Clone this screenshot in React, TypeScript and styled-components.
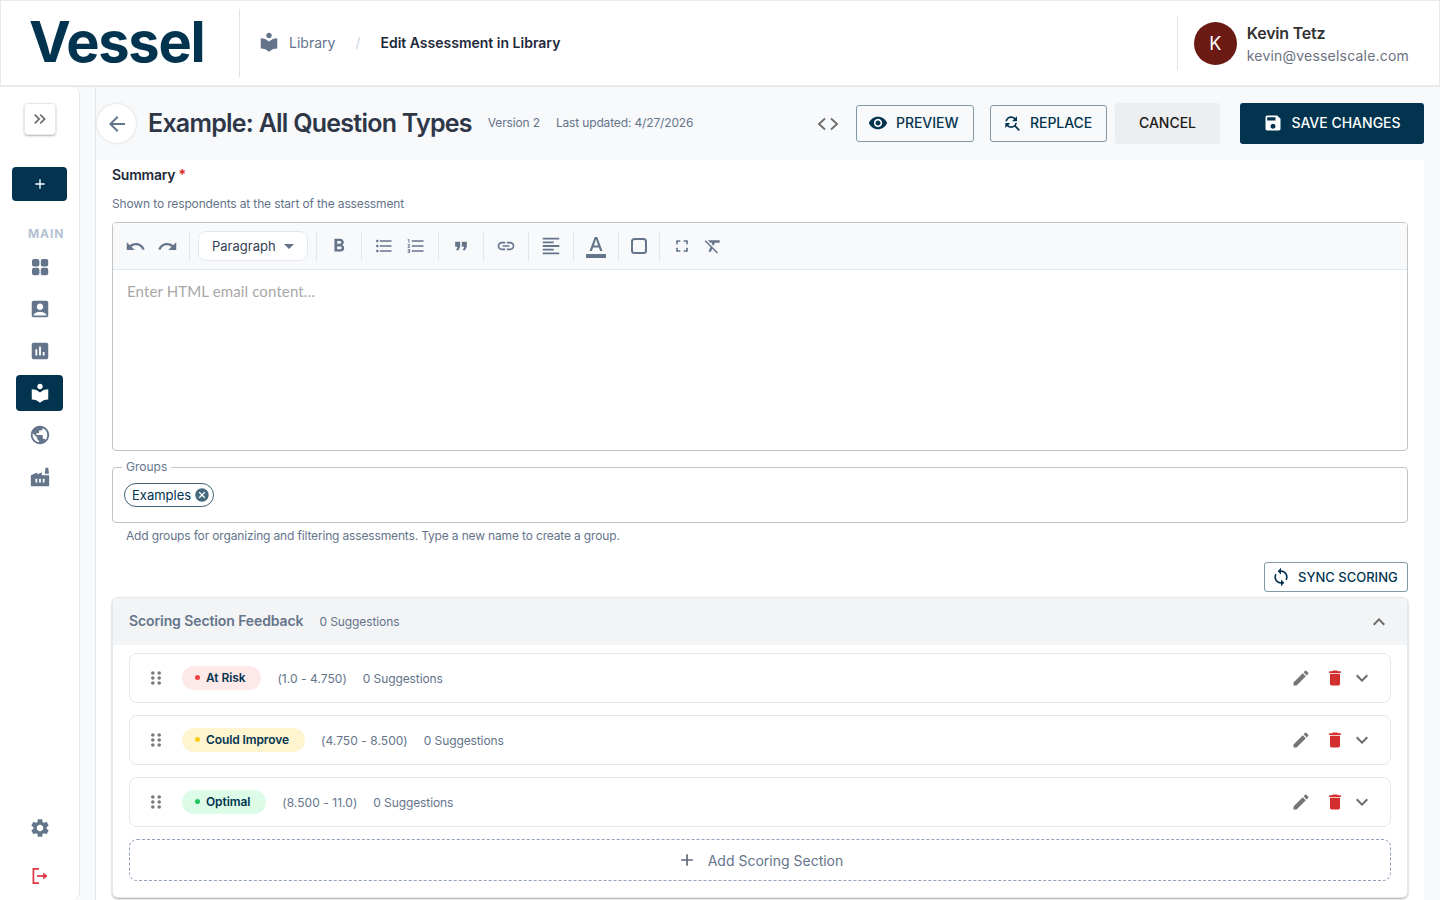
import React from 'react'
import styled, {createGlobalStyle} from 'styled-components'
import {
    MdAccountBox, MdAdd, MdArrowBack, MdAssessment, MdCancel, MdDelete,
    MdEdit, MdExpandLess, MdExpandMore, MdFactory, MdFindReplace, MdFormatAlignLeft, MdFormatBold, MdFormatClear,
    MdFormatColorText, MdFormatListBulleted, MdFormatListNumbered, MdFormatQuote, MdFullscreen,
    MdKeyboardDoubleArrowRight, MdLink, MdLocalLibrary, MdPublic, MdRedo, MdSave, MdSettings, MdSync, MdUndo,
    MdVisibility
} from 'react-icons/md'

const navy = '#02344f'
const slate = '#64748b'

const GlobalStyle = createGlobalStyle`
    html, body {
        margin: 0;
        padding: 0;
        height: 100%;
        background: #f8f9fb;
        font-family: Inter, "Liberation Sans", sans-serif;
    }
    * {
        box-sizing: border-box;
    }
`

const sections = [
    {name: 'At Risk', range: '(1.0 - 4.750)', bg: '#fee9e9', dot: '#ef4444'},
    {name: 'Could Improve', range: '(4.750 - 8.500)', bg: '#fef4cf', dot: '#facc15'},
    {name: 'Optimal', range: '(8.500 - 11.0)', bg: '#dcfce7', dot: '#22c55e'}
]

const DashboardIcon = () => (
    <svg width="24" height="24" viewBox="0 0 24 24" fill="currentColor">
        <rect x="4" y="4" width="7.4" height="7.4" rx="2" />
        <rect x="12.8" y="4" width="7.4" height="7.4" rx="2" />
        <rect x="4" y="12.8" width="7.4" height="7.4" rx="2" />
        <rect x="12.8" y="12.8" width="7.4" height="7.4" rx="2" />
    </svg>
)

const LogoutIcon = () => (
    <svg width="20" height="20" viewBox="0 0 20 20" fill="none" stroke="#dc3545" strokeWidth="1.7">
        <path d="M9 2.8H3.4v14.4H9" />
        <path d="M7 10h10" />
        <path d="M13.6 7.2 17 10l-3.4 2.8z" fill="#dc3545" strokeWidth="0.8" />
    </svg>
)

const DragDots = () => (
    <svg width="10" height="14" viewBox="0 0 10 14" fill="#7a7a7a">
        {[2, 7, 12].map(y => [1.8, 8.2].map(x => <circle key={`${x}-${y}`} cx={x} cy={y} r="1.8" />))}
    </svg>
)

const CodeIcon = () => (
    <svg width="22" height="14" viewBox="0 0 22 14" fill="none" stroke="currentColor" strokeWidth="1.8">
        <path d="M8 1.5 2 7l6 5.5" />
        <path d="M14 1.5 20 7l-6 5.5" />
    </svg>
)

const SquareIcon = () => (
    <svg width="18" height="18" viewBox="0 0 18 18" fill="none" stroke="currentColor" strokeWidth="2">
        <rect x="2" y="2" width="14" height="14" rx="2.5" />
    </svg>
)

export default function App() {
    return (
        <Page>
            <GlobalStyle />
            <Header>
                <Logo>Vessel</Logo>
                <Crumbs>
                    <CrumbIcon><MdLocalLibrary size={22} /></CrumbIcon>
                    <CrumbLink>Library</CrumbLink>
                    <CrumbSlash>/</CrumbSlash>
                    <CrumbCurrent>Edit Assessment in Library</CrumbCurrent>
                </Crumbs>
                <UserBlock>
                    <Avatar>K</Avatar>
                    <UserText>
                        <UserName>Kevin Tetz</UserName>
                        <UserEmail>kevin@vesselscale.com</UserEmail>
                    </UserText>
                </UserBlock>
            </Header>
            <Body>
                <Sidebar>
                    <CollapseButton><MdKeyboardDoubleArrowRight size={20} /></CollapseButton>
                    <CreateButton><MdAdd size={16} /></CreateButton>
                    <NavLabel>MAIN</NavLabel>
                    <NavList>
                        <NavItem><DashboardIcon /></NavItem>
                        <NavItem><MdAccountBox size={22} /></NavItem>
                        <NavItem><MdAssessment size={22} /></NavItem>
                        <NavItem $active><MdLocalLibrary size={22} /></NavItem>
                        <NavItem><MdPublic size={22} /></NavItem>
                        <NavItem><MdFactory size={22} /></NavItem>
                    </NavList>
                    <NavFooter>
                        <NavItem><MdSettings size={22} /></NavItem>
                        <NavItem><LogoutIcon /></NavItem>
                    </NavFooter>
                </Sidebar>
                <Main>
                    <TopBar>
                        <BackButton><MdArrowBack size={24} /></BackButton>
                        <Title>Example: All Question Types</Title>
                        <Meta>Version 2</Meta>
                        <Meta>Last updated: 4/27/2026</Meta>
                        <TopActions>
                            <CodeToggle><CodeIcon /></CodeToggle>
                            <OutlineButton $width={118}><MdVisibility size={20} />PREVIEW</OutlineButton>
                            <OutlineButton $width={117}><MdFindReplace size={20} />REPLACE</OutlineButton>
                            <CancelButton>CANCEL</CancelButton>
                            <SaveButton><MdSave size={20} />SAVE CHANGES</SaveButton>
                        </TopActions>
                    </TopBar>
                    <Content>
                        <FieldLabel>Summary <Required>*</Required></FieldLabel>
                        <FieldHint>Shown to respondents at the start of the assessment</FieldHint>
                        <Editor>
                            <Toolbar>
                                <ToolGroup>
                                    <Tool><MdUndo size={21} /></Tool>
                                    <Tool><MdRedo size={21} /></Tool>
                                </ToolGroup>
                                <ToolGroup $pad={8}>
                                    <BlockSelect>Paragraph<SelectCaret /></BlockSelect>
                                </ToolGroup>
                                <ToolGroup>
                                    <Tool><MdFormatBold size={22} /></Tool>
                                </ToolGroup>
                                <ToolGroup>
                                    <Tool><MdFormatListBulleted size={20} /></Tool>
                                    <Tool><MdFormatListNumbered size={20} /></Tool>
                                </ToolGroup>
                                <ToolGroup>
                                    <Tool><MdFormatQuote size={20} /></Tool>
                                </ToolGroup>
                                <ToolGroup>
                                    <Tool><MdLink size={20} /></Tool>
                                </ToolGroup>
                                <ToolGroup>
                                    <Tool><MdFormatAlignLeft size={22} /></Tool>
                                </ToolGroup>
                                <ToolGroup>
                                    <Tool><MdFormatColorText size={24} /></Tool>
                                </ToolGroup>
                                <ToolGroup $pad={5}>
                                    <Tool $width={30}><SquareIcon /></Tool>
                                </ToolGroup>
                                <ToolGroup $last>
                                    <Tool $width={31}><MdFullscreen size={20} /></Tool>
                                    <Tool $width={31}><MdFormatClear size={20} /></Tool>
                                </ToolGroup>
                            </Toolbar>
                            <EditorBody>Enter HTML email content...</EditorBody>
                        </Editor>
                        <GroupsField>
                            <GroupsLegend>Groups</GroupsLegend>
                            <Chip>Examples<MdCancel size={16} /></Chip>
                        </GroupsField>
                        <GroupsHint>Add groups for organizing and filtering assessments. Type a new name to create a group.</GroupsHint>
                        <SyncRow>
                            <SyncButton><MdSync size={20} />SYNC SCORING</SyncButton>
                        </SyncRow>
                        <FeedbackCard>
                            <FeedbackHeader>
                                <FeedbackTitle>Scoring Section Feedback</FeedbackTitle>
                                <Muted>0 Suggestions</Muted>
                                <HeaderChevron><MdExpandLess size={24} /></HeaderChevron>
                            </FeedbackHeader>
                            <FeedbackBody>
                                {sections.map(section => (
                                    <SectionRow key={section.name}>
                                        <DragHandle><DragDots /></DragHandle>
                                        <Badge $bg={section.bg} $dot={section.dot}>{section.name}</Badge>
                                        <RangeText>{section.range}</RangeText>
                                        <Muted>0 Suggestions</Muted>
                                        <RowActions>
                                            <EditIcon><MdEdit size={20} /></EditIcon>
                                            <DeleteIcon><MdDelete size={20} /></DeleteIcon>
                                            <ExpandIcon><MdExpandMore size={24} /></ExpandIcon>
                                        </RowActions>
                                    </SectionRow>
                                ))}
                                <AddSection><MdAdd size={20} />Add Scoring Section</AddSection>
                            </FeedbackBody>
                        </FeedbackCard>
                    </Content>
                </Main>
            </Body>
        </Page>
    )
}

const Page = styled.div`
    display: flex;
    flex-direction: column;
    height: 900px;
    overflow: hidden;
`

const Header = styled.header`
    display: flex;
    align-items: center;
    flex-shrink: 0;
    height: 87px;
    background: #fff;
    border: 1px solid #e8e9eb;
    border-bottom-width: 2px;
`

const Logo = styled.div`
    display: flex;
    align-items: center;
    width: 239px;
    height: 68px;
    padding-left: 28px;
    padding-bottom: 2px;
    border-right: 1px solid #e0e2e5;
    color: ${navy};
    font-size: 56px;
    font-weight: 700;
    letter-spacing: -1.25px;
`

const Crumbs = styled.nav`
    display: flex;
    align-items: center;
    margin-left: 18px;
    margin-bottom: 2px;
    font-size: 14px;
`

const CrumbIcon = styled.span`
    display: flex;
    margin-right: 9px;
    color: ${slate};
`

const CrumbLink = styled.span`
    color: ${slate};
`

const CrumbSlash = styled.span`
    margin: 0 20px;
    color: #cbd5e1;
`

const CrumbCurrent = styled.span`
    color: #1e293b;
    font-weight: 600;
`

const UserBlock = styled.div`
    display: flex;
    align-items: center;
    height: 54px;
    margin-left: auto;
    margin-right: 30px;
    padding-left: 16px;
    border-left: 1px solid #e0e2e5;
`

const Avatar = styled.div`
    display: flex;
    align-items: center;
    justify-content: center;
    width: 43px;
    height: 43px;
    border-radius: 50%;
    background: #6b1a14;
    color: #fff;
    font-size: 18px;
`

const UserText = styled.div`
    display: flex;
    flex-direction: column;
    gap: 4px;
    margin-left: 10px;
`

const UserName = styled.div`
    color: #333;
    font-size: 16px;
    font-weight: 600;
    letter-spacing: -0.2px;
`

const UserEmail = styled.div`
    color: #6b7280;
    font-size: 14px;
    letter-spacing: 0.2px;
`

const Body = styled.div`
    display: flex;
    flex: 1;
    min-height: 0;
`

const Sidebar = styled.aside`
    display: flex;
    flex-direction: column;
    align-items: center;
    flex-shrink: 0;
    width: 80px;
    margin-right: 15px;
    padding-top: 16px;
    padding-bottom: 6px;
    background: #fff;
    border-right: 1px solid #e5e7eb;
    border-radius: 0 8px 8px 0;
`

const CollapseButton = styled.div`
    display: flex;
    align-items: center;
    justify-content: center;
    width: 32px;
    height: 32px;
    border: 1px solid #e7e8ea;
    border-radius: 4px;
    box-shadow: 0 1px 2px rgba(0, 0, 0, 0.3);
    color: #6b6b6b;
`

const CreateButton = styled.div`
    display: flex;
    align-items: center;
    justify-content: center;
    width: 55px;
    height: 34px;
    margin-top: 32px;
    border-radius: 4px;
    background: ${navy};
    color: #fff;
`

const NavLabel = styled.div`
    align-self: flex-start;
    margin-top: 25px;
    margin-left: 28px;
    color: #b4c2d3;
    font-size: 12px;
    line-height: 15px;
    font-weight: 700;
    letter-spacing: 0.9px;
`

const NavList = styled.div`
    display: flex;
    flex-direction: column;
    align-items: center;
    gap: 6px;
    margin-top: 8px;
`

const NavItem = styled.div<{$active?: boolean}>`
    display: flex;
    align-items: center;
    justify-content: center;
    width: 47px;
    height: 36px;
    border-radius: 4px;
    background: ${({$active}) => ($active ? navy : 'transparent')};
    color: ${({$active}) => ($active ? '#fff' : slate)};
`

const NavFooter = styled.div`
    display: flex;
    flex-direction: column;
    gap: 12px;
    margin-top: auto;
`

const Main = styled.main`
    display: flex;
    flex-direction: column;
    width: 1329px;
    border-left: 1px solid #e5e7eb;
`

const TopBar = styled.div`
    display: flex;
    align-items: center;
    flex-shrink: 0;
    height: 73px;
`

const BackButton = styled.div`
    display: flex;
    align-items: center;
    justify-content: center;
    width: 39px;
    height: 39px;
    margin-left: 1px;
    border-radius: 50%;
    background: #fff;
    box-shadow: 0 0 3px rgba(0, 0, 0, 0.16);
    color: ${slate};
`

const Title = styled.h1`
    margin: 0 16px 2px 12px;
    color: #2d3748;
    font-size: 25px;
    font-weight: 600;
    letter-spacing: -0.75px;
`

const Meta = styled.span`
    margin-right: 16px;
    margin-bottom: 2px;
    color: ${slate};
    font-size: 12px;
    letter-spacing: -0.15px;
`

const TopActions = styled.div`
    display: flex;
    align-items: center;
    margin-left: auto;
`

const CodeToggle = styled.div`
    display: flex;
    margin-right: 17px;
    color: #6b6b6b;
`

const OutlineButton = styled.div<{$width: number}>`
    display: flex;
    align-items: center;
    gap: 8px;
    width: ${({$width}) => $width}px;
    height: 37px;
    margin-right: 16px;
    padding-left: 11px;
    padding-bottom: 2px;
    border: 1px solid #7f99a7;
    border-radius: 3px;
    color: ${navy};
    font-size: 14px;
    font-weight: 500;
    letter-spacing: -0.05px;
    &:nth-child(3) {
        margin-right: 8px;
    }
`

const CancelButton = styled.div`
    display: flex;
    align-items: center;
    justify-content: center;
    width: 105px;
    height: 41px;
    margin-right: 20px;
    padding-bottom: 2px;
    border-radius: 3px;
    background: #edeef0;
    color: #1a1a1a;
    font-size: 14px;
    font-weight: 500;
`

const SaveButton = styled.div`
    display: flex;
    align-items: center;
    justify-content: center;
    gap: 8px;
    width: 184px;
    height: 41px;
    padding-bottom: 2px;
    border-radius: 3px;
    background: ${navy};
    color: #fff;
    font-size: 14px;
    font-weight: 500;
`

const Content = styled.div`
    flex: 1;
    padding: 6px 16px 0;
    background: #fff;
`

const FieldLabel = styled.div`
    color: #1e293b;
    font-size: 14px;
    line-height: 17px;
    font-weight: 600;
    letter-spacing: -0.25px;
`

const Required = styled.span`
    color: #dc2626;
`

const FieldHint = styled.div`
    margin-top: 13px;
    color: ${slate};
    font-size: 12px;
    line-height: 15px;
    letter-spacing: -0.14px;
`

const Editor = styled.div`
    height: 229px;
    margin-top: 11px;
    border: 1px solid #c4c4c4;
    border-radius: 4px;
    overflow: hidden;
`

const Toolbar = styled.div`
    display: flex;
    align-items: center;
    height: 47px;
    background: #f8f9fb;
    border-bottom: 1px solid #e2e8f0;
`

const ToolGroup = styled.div<{$last?: boolean; $pad?: number}>`
    display: flex;
    align-items: center;
    flex-shrink: 0;
    height: 30px;
    padding: 0 ${({$pad}) => $pad ?? 6}px;
    border-right: ${({$last}) => ($last ? 'none' : '1px solid #e2e8f0')};
`

const Tool = styled.div<{$width?: number}>`
    display: flex;
    align-items: center;
    justify-content: center;
    width: ${({$width}) => $width ?? 32}px;
    height: 30px;
    color: ${slate};
`

const BlockSelect = styled.div`
    display: flex;
    align-items: center;
    justify-content: space-between;
    width: 110px;
    height: 30px;
    padding: 0 13px;
    border: 1px solid #e2e8f0;
    border-radius: 8px;
    background: #fff;
    color: #334155;
    font-size: 13px;
`

const SelectCaret = styled.span`
    width: 0;
    height: 0;
    border-left: 5px solid transparent;
    border-right: 5px solid transparent;
    border-top: 5px solid ${slate};
`

const EditorBody = styled.div`
    padding: 12px 14px;
    color: #a8a8a8;
    font-family: Lato, sans-serif;
    font-size: 15px;
    line-height: 18px;
    letter-spacing: 0.13px;
`

const GroupsField = styled.div`
    position: relative;
    display: flex;
    align-items: center;
    height: 56px;
    margin-top: 16px;
    padding: 0 11px 1px;
    border: 1px solid #c4c4c4;
    border-radius: 4px;
`

const GroupsLegend = styled.span`
    position: absolute;
    top: -9px;
    left: 9px;
    padding: 0 4px;
    background: #fff;
    color: ${slate};
    font-size: 12px;
    line-height: 15px;
`

const Chip = styled.div`
    display: flex;
    align-items: center;
    gap: 3px;
    height: 24px;
    padding: 0 3px 0 7px;
    border: 1px solid #3f6478;
    border-radius: 12px;
    color: ${navy};
    font-size: 13px;
    & > svg {
        color: #456a7e;
    }
`

const GroupsHint = styled.div`
    margin-top: 5px;
    margin-left: 14px;
    color: ${slate};
    font-size: 12px;
    line-height: 15px;
    letter-spacing: -0.155px;
`

const SyncRow = styled.div`
    display: flex;
    justify-content: flex-end;
    margin-top: 19px;
`

const SyncButton = styled.div`
    display: flex;
    align-items: center;
    gap: 7px;
    width: 144px;
    height: 30px;
    padding-left: 6px;
    border: 1px solid #7f99a7;
    border-radius: 3px;
    color: ${navy};
    font-size: 13px;
    font-weight: 500;
`

const FeedbackCard = styled.section`
    height: 301px;
    margin-top: 5px;
    border: 1px solid #e2e8f0;
    border-radius: 6px;
    box-shadow: 0 1px 2px rgba(0, 0, 0, 0.35);
    overflow: hidden;
`

const FeedbackHeader = styled.div`
    display: flex;
    align-items: center;
    gap: 16px;
    height: 47px;
    padding: 0 16px;
    background: #f3f4f5;
`

const FeedbackTitle = styled.div`
    margin-bottom: 2px;
    color: ${slate};
    font-size: 14px;
    font-weight: 600;
    letter-spacing: -0.1px;
`

const Muted = styled.span`
    color: ${slate};
    font-size: 12px;
    letter-spacing: -0.1px;
`

const RangeText = styled(Muted)`
    letter-spacing: 0.05px;
`

const HeaderChevron = styled.div`
    display: flex;
    margin-left: auto;
    color: #6b6b6b;
`

const FeedbackBody = styled.div`
    display: flex;
    flex-direction: column;
    gap: 12px;
    padding: 8px 16px 0;
`

const SectionRow = styled.div`
    display: flex;
    align-items: center;
    gap: 16px;
    height: 50px;
    padding-left: 21px;
    border: 1px solid #e2e8f0;
    border-radius: 8px;
`

const DragHandle = styled.div`
    display: flex;
    margin-right: 5px;
`

const Badge = styled.span<{$bg: string; $dot: string}>`
    display: flex;
    align-items: center;
    height: 24px;
    padding: 0 16px 2px 13px;
    border-radius: 12px;
    background: ${({$bg}) => $bg};
    color: ${navy};
    font-size: 12px;
    font-weight: 600;
    letter-spacing: -0.1px;
    &::before {
        content: '';
        width: 5px;
        height: 5px;
        margin-right: 6px;
        border-radius: 50%;
        background: ${({$dot}) => $dot};
    }
`

const RowActions = styled.div`
    display: flex;
    align-items: center;
    margin-left: auto;
    margin-right: 16px;
`

const EditIcon = styled.div`
    display: flex;
    margin-right: 14px;
    color: #757575;
`

const DeleteIcon = styled.div`
    display: flex;
    margin-right: 5px;
    color: #d32f2f;
`

const ExpandIcon = styled.div`
    display: flex;
    color: #6b6b6b;
`

const AddSection = styled.div`
    display: flex;
    align-items: center;
    justify-content: center;
    gap: 11px;
    height: 42px;
    border: 1px dashed #94a3b8;
    border-radius: 8px;
    color: ${slate};
    font-size: 14px;
    & > svg {
        color: #5f6b7a;
    }
`
